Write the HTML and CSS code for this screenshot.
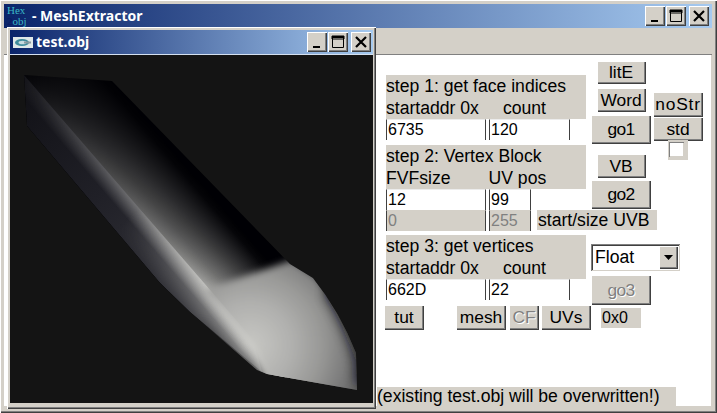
FILE: index.html
```html
<!DOCTYPE html>
<html lang="en">
<head>
<meta charset="utf-8">
<title>MeshExtractor</title>
<link rel="stylesheet" href="styles.css">
</head>
<body>
<div class="app">
  <header class="titlebar">
    <div class="app-icon"><span class="hex">Hex</span><span class="obj"><span class="two">2</span>obj</span></div>
    <span class="title-text">- MeshExtractor</span>
    <div class="caption">
      <button class="cap"><svg width="14" height="14" viewBox="0 0 14 14"><path d="M3 11h7v2H3z"/></svg></button>
      <button class="cap"><svg width="14" height="14" viewBox="0 0 14 14"><path d="M1.5 2.5h11v10h-11zM1 1h12v3H1z" fill="none" stroke="#000"/><path d="M1 1h12v2H1z"/></svg></button>
      <button class="cap cap-close"><svg width="14" height="14" viewBox="0 0 14 14"><path d="M2 2l10 10M12 2L2 12" stroke="#000" stroke-width="2.2"/></svg></button>
    </div>
  </header>
  <div class="band"></div>
  <main class="client">
    <div class="form-top">
      <div class="steps">
        <div class="label block">step 1: get face indices<br>startaddr 0x<span class="count">count</span></div>
        <div class="row"><input class="field wide" value="6735"><input class="field mid-f" value="120"></div>
        <div class="label block gap5">step 2: Vertex Block<br>FVFsize<span class="uvpos">UV pos</span></div>
        <div class="row"><input class="field wide" value="12"><input class="field small" value="99"></div>
        <div class="row"><input class="field wide off" value="0" disabled><input class="field small off" value="255" disabled><span class="label uvb">start/size UVB</span></div>
        <div class="label block gap4">step 3: get vertices<br>startaddr 0x<span class="count">count</span></div>
        <div class="row"><input class="field wide" value="662D"><input class="field mid-f" value="22"></div>
      </div>
      <div class="actions">
        <button class="btn b-lite">litE</button>
        <button class="btn b-word">Word</button>
        <button class="btn b-go">go1</button>
        <button class="btn b-vb">VB</button>
        <button class="btn b-go b-go2">go2</button>
        <div class="combo"><span class="combo-value">Float</span><span class="combo-arrow"><svg width="9" height="5" viewBox="0 0 9 5"><path d="M0 0h9L4.5 5z"/></svg></span></div>
        <button class="btn b-go b-go3 dim">go3</button>
      </div>
      <div class="extras">
        <button class="btn b-ns">noStr</button>
        <button class="btn b-std">std</button>
        <div class="check"><span class="check-box"></span></div>
      </div>
    </div>
    <div class="tools">
      <button class="btn b-tut">tut</button>
      <button class="btn b-mesh">mesh</button>
      <button class="btn b-cf dim">CF</button>
      <button class="btn b-uvs">UVs</button>
      <span class="label hexout">0x0</span>
    </div>
    <div class="label warning">(existing test.obj will be overwritten!)</div>
  </main>
  <section class="child">
    <header class="titlebar child-title">
      <svg class="doc-icon" width="20" height="11" viewBox="0 0 20 11"><rect width="20" height="11" fill="#dfe8e8"/><ellipse cx="9" cy="5.5" rx="7" ry="3.6" fill="#3f8c9c"/><ellipse cx="9.5" cy="5.5" rx="4" ry="1.8" fill="#c8dce0"/><rect x="11" y="4.5" width="7" height="2" fill="#8a9aa0"/></svg>
      <span class="title-text">test.obj</span>
      <div class="caption">
        <button class="cap"><svg width="14" height="14" viewBox="0 0 14 14"><path d="M3 11h7v2H3z"/></svg></button>
        <button class="cap"><svg width="14" height="14" viewBox="0 0 14 14"><path d="M1.5 2.5h11v10h-11zM1 1h12v3H1z" fill="none" stroke="#000"/><path d="M1 1h12v2H1z"/></svg></button>
        <button class="cap cap-close"><svg width="14" height="14" viewBox="0 0 14 14"><path d="M2 2l10 10M12 2L2 12" stroke="#000" stroke-width="2.2"/></svg></button>
      </div>
    </header>
    <svg class="view" width="363" height="348" viewBox="10 55 363 348">
      <defs>
        <clipPath id="hull"><path d="M24 75L112 81L290 264L313 278Q340 312 356 353L357 390L267 374L257 370L190 312L160 283L27 126Z"/></clipPath>
        <linearGradient id="lower" gradientUnits="userSpaceOnUse" x1="24" y1="75" x2="253" y2="340">
          <stop offset="0" stop-color="#101015"/>
          <stop offset="0.4" stop-color="#202027"/>
          <stop offset="0.7" stop-color="#303036"/>
          <stop offset="1" stop-color="#3c3c40"/>
        </linearGradient>
        <linearGradient id="cross" gradientUnits="userSpaceOnUse" x1="-6.3" y1="101.2" x2="84.6" y2="22.7">
          <stop offset="0.2" stop-color="#d0d0cc" stop-opacity="0"/>
          <stop offset="0.333" stop-color="#d0d0cc"/>
          <stop offset="0.45" stop-color="#d0d0cc" stop-opacity="0.7"/>
          <stop offset="0.6" stop-color="#d0d0cc" stop-opacity="0.4"/>
          <stop offset="0.8" stop-color="#d0d0cc" stop-opacity="0.04"/>
          <stop offset="0.86" stop-color="#d0d0cc" stop-opacity="0"/>
        </linearGradient>
        <linearGradient id="crossLow" gradientUnits="userSpaceOnUse" x1="-6.3" y1="101.2" x2="84.6" y2="22.7">
          <stop offset="0.05" stop-color="#d0d0cc" stop-opacity="0"/>
          <stop offset="0.333" stop-color="#d0d0cc"/>
          <stop offset="0.34" stop-color="#d0d0cc" stop-opacity="0"/>
        </linearGradient>
        <linearGradient id="alongGrad" gradientUnits="userSpaceOnUse" x1="24" y1="75" x2="253" y2="340">
          <stop offset="0" stop-color="#fff" stop-opacity="0.02"/>
          <stop offset="0.2" stop-color="#fff" stop-opacity="0.2"/>
          <stop offset="0.62" stop-color="#fff" stop-opacity="0.56"/>
          <stop offset="0.8" stop-color="#fff" stop-opacity="0.78"/>
          <stop offset="1" stop-color="#fff"/>
        </linearGradient>
        <linearGradient id="alongLow" gradientUnits="userSpaceOnUse" x1="24" y1="75" x2="253" y2="340">
          <stop offset="0.5" stop-color="#fff" stop-opacity="0"/>
          <stop offset="0.8" stop-color="#fff" stop-opacity="0.6"/>
          <stop offset="1" stop-color="#fff"/>
        </linearGradient>
        <mask id="alongMask" maskUnits="userSpaceOnUse" x="10" y="55" width="363" height="348"><rect x="10" y="55" width="363" height="348" fill="url(#alongGrad)"/></mask>
        <mask id="alongLowMask" maskUnits="userSpaceOnUse" x="10" y="55" width="363" height="348"><rect x="10" y="55" width="363" height="348" fill="url(#alongLow)"/></mask>
        <radialGradient id="nose" gradientUnits="userSpaceOnUse" cx="250" cy="345" r="120">
          <stop offset="0" stop-color="#c8c8c4"/>
          <stop offset="0.35" stop-color="#b0b0ae"/>
          <stop offset="0.6" stop-color="#989896"/>
          <stop offset="0.8" stop-color="#7c7c7c"/>
          <stop offset="1" stop-color="#606060"/>
        </radialGradient>
        <filter id="soft" x="-20%" y="-20%" width="140%" height="140%"><feGaussianBlur stdDeviation="3.5"/></filter>
        <filter id="softer" x="-40%" y="-40%" width="180%" height="180%"><feGaussianBlur stdDeviation="6"/></filter>
      </defs>
      <rect x="10" y="55" width="363" height="348" fill="#141414"/>
      <g clip-path="url(#hull)">
        <rect x="10" y="55" width="363" height="348" fill="#000004"/>
        <path d="M24 75L253 340L262 372L190 312L160 283L27 126Z" fill="url(#lower)"/>
        <rect x="10" y="55" width="363" height="348" fill="url(#cross)" mask="url(#alongMask)"/>
        <rect x="10" y="55" width="363" height="348" fill="url(#crossLow)" mask="url(#alongLowMask)"/>
        <path d="M205 290L292 260L316 276L340 311L362 353L362 398L268 380L256 350L225 312Z" fill="url(#nose)" filter="url(#soft)"/>
        <path d="M328 290Q350 325 360 360L361 385" fill="none" stroke="#101012" stroke-width="10" opacity="0.85" filter="url(#softer)"/>
        <path d="M200 326L256 376" fill="none" stroke="#101012" stroke-width="4" opacity="0.5" filter="url(#softer)"/>
      </g>
    </svg>
  </section>
</div>
</body>
</html>
```

FILE: styles.css
```css
* { box-sizing: border-box; }
html, body { margin: 0; padding: 0; }
body { width: 717px; height: 413px; overflow: hidden; background: #d4d0c8; font-family: "Liberation Sans", Arial, sans-serif; font-size: 16px; color: #000; }

.app { position: relative; width: 717px; height: 413px; padding: 4px 5px 7px 4px; display: flex; flex-direction: column; background: #d4d0c8; box-shadow: inset 1px 1px #fff, inset -1px -1px #404040, inset -2px -2px #808080; }

.titlebar { height: 24px; flex: none; display: flex; align-items: center; background: linear-gradient(90deg, #0a246a, #a6caf0); color: #fff; }
.title-text { font-family: "Noto Sans", sans-serif; font-weight: 700; font-size: 14px; line-height: 1; }
.app-icon { width: 22px; height: 22px; margin: 0 4px 0 2px; display: flex; flex-direction: column; font-family: "Liberation Serif", serif; font-size: 11px; line-height: 11px; color: #3bb8c4; white-space: nowrap; }
.hex { padding-left: 1px; }
.obj { padding-left: 1px; }
.two { color: #0a1a60; }
.caption { margin-left: auto; margin-right: 3px; display: flex; gap: 1px; }
.cap { width: 20px; height: 20px; padding: 0; border: 0; display: flex; align-items: center; justify-content: center; background: #d4d0c8; box-shadow: inset 1px 1px #fff, inset -1px -1px #404040, inset -2px -2px #808080; }
.cap-close { margin-left: 2px; }

.band { height: 27px; flex: none; background: #d4d0c8; border-bottom: 1px solid #808080; }

.client { flex: 1; min-height: 0; display: flex; flex-direction: column; padding-left: 373px; background: #fff; box-shadow: inset -1px 0 #d4d0c8; }

.form-top { display: flex; height: 250px; padding-top: 6px; }
.steps { width: 205px; margin: 14px 0 0 9px; flex: none; }
.label { background: #d4d0c8; font-size: 17.6px; line-height: 22px; white-space: nowrap; }
.block { width: 200px; height: 44px; }
.gap5 { margin-top: 5px; }
.gap4 { margin-top: 4px; }
.count { margin-left: 24px; }
.uvpos { margin-left: 38px; }
.row { display: flex; gap: 3px; height: 21px; }
.field { height: 21px; padding: 0 0 0 1px; border: 0; border-left: 1px solid #404040; border-right: 1px solid #404040; border-top: 1px solid #ececec; background: #fff; font: 16px "Liberation Sans", Arial, sans-serif; color: #000; outline: 0; }
.wide { width: 100px; }
.mid-f { width: 81px; }
.small { width: 42px; }
.off { background: #d4d0c8; color: #808080; border-top-color: #d4d0c8; }
.uvb { margin-left: 3px; width: 120px; height: 20px; line-height: 20px; padding-left: 1px; flex: none; }

.actions { width: 60px; flex: none; display: flex; flex-direction: column; align-items: center; }
.btn { padding: 0; border: 0; background: #d4d0c8; font: 17.4px "Liberation Sans", Arial, sans-serif; color: #000; box-shadow: inset 1px 1px #fff, inset -1px -1px #404040, inset -2px -2px #808080; }
.dim { color: #808080; text-shadow: 1px 1px #fff; }
.b-lite { width: 49px; height: 23px; }
.b-word { width: 49px; height: 24px; margin-top: 4px; }
.b-go { width: 60px; height: 29px; margin-top: 3px; letter-spacing: -0.6px; }
.b-vb { width: 49px; height: 24px; margin-top: 10px; }
.b-go2 { margin-top: 2px; }
.combo { width: 89px; height: 27px; margin-top: 35px; align-self: flex-start; flex: none; display: flex; align-items: center; justify-content: space-between; padding: 2px; background: #fff; font-size: 17.6px; box-shadow: inset 1px 1px #808080, inset -1px -1px #d4d0c8, inset 2px 2px #404040; }
.combo-value { padding-left: 2px; }
.combo-arrow { width: 19px; height: 23px; display: flex; align-items: center; justify-content: center; background: #d4d0c8; box-shadow: inset 1px 1px #fff, inset -1px -1px #404040, inset -2px -2px #808080; }
.b-go3 { height: 30px; margin-top: 4px; }

.extras { width: 50px; margin: 31px 0 0 2px; flex: none; display: flex; flex-direction: column; align-items: center; }
.b-ns { width: 50px; height: 25px; letter-spacing: 0.8px; }
.b-std { width: 50px; height: 24px; }
.check { width: 20px; height: 20px; margin-top: -1px; padding: 2px 4px 3px 1px; background: #d4d0c8; }
.check-box { display: block; width: 15px; height: 15px; background: #fff; box-shadow: inset 1px 1px #808080, inset -1px -1px #d4d0c8; }

.tools { display: flex; align-items: flex-start; padding-left: 7px; }
.b-tut { width: 40px; height: 25px; }
.b-mesh { width: 50px; height: 25px; margin-left: 32px; }
.b-cf { width: 30px; height: 25px; margin-left: 3px; }
.b-uvs { width: 50px; height: 25px; margin-left: 2px; }
.hexout { width: 40px; height: 20px; line-height: 20px; margin: 3px 0 0 10px; padding-left: 1px; font-size: 16px; }

.warning { margin-top: auto; width: 299px; height: 19px; line-height: 19px; }

.child { position: absolute; left: 7px; top: 27px; width: 369px; height: 382px; padding: 3px; display: flex; flex-direction: column; background: #d4d0c8; box-shadow: inset 1px 1px #fff, inset -1px -1px #404040, inset -2px -2px #808080; }
.child-title { height: 25px; border-bottom: 1px solid #d4e0f0; }
.doc-icon { margin: 0 3px 0 3px; flex: none; }
.child-title .caption { margin-right: 2px; }
.view { display: block; flex: none; }
```
